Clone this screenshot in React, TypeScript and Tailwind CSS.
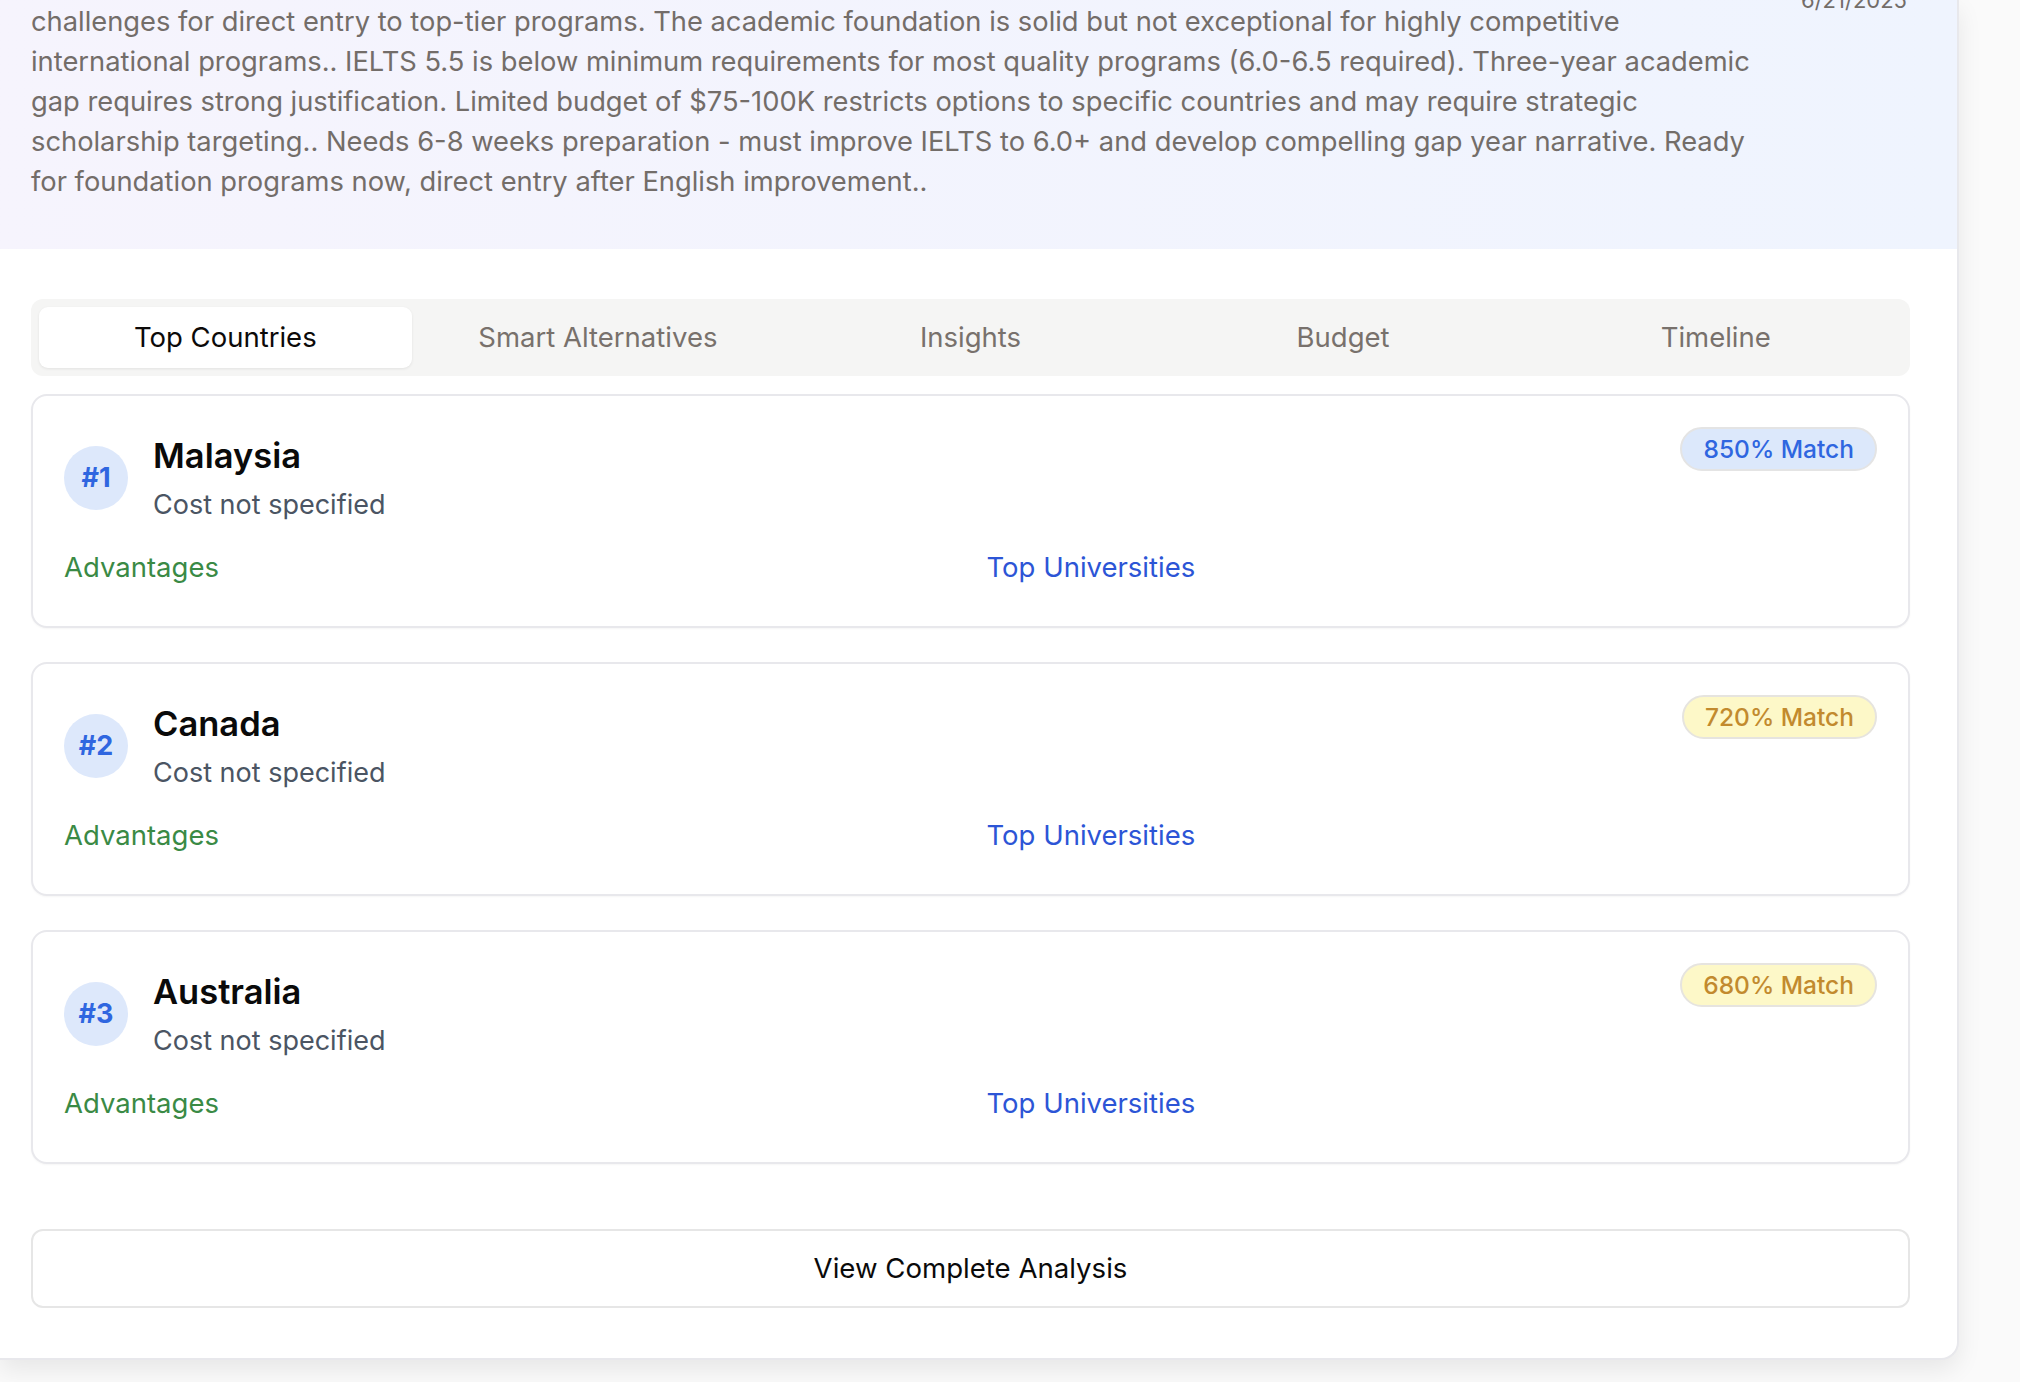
import React from 'react';

const summaryLines = [
  'challenges for direct entry to top-tier programs. The academic foundation is solid but not exceptional for highly competitive',
  'international programs.. IELTS 5.5 is below minimum requirements for most quality programs (6.0-6.5 required). Three-year academic',
  'gap requires strong justification. Limited budget of $75-100K restricts options to specific countries and may require strategic',
  'scholarship targeting.. Needs 6-8 weeks preparation - must improve IELTS to 6.0+ and develop compelling gap year narrative. Ready',
  'for foundation programs now, direct entry after English improvement..',
];

const tabs = ['Top Countries', 'Smart Alternatives', 'Insights', 'Budget', 'Timeline'];

const countries = [
  { rank: 1, name: 'Malaysia', match: 850, tone: 'blue' },
  { rank: 2, name: 'Canada', match: 720, tone: 'yellow' },
  { rank: 3, name: 'Australia', match: 680, tone: 'yellow' },
];

const CountryCard = ({ country }: { country: (typeof countries)[number] }) => {
  const isBlue = country.tone === 'blue';

  return (
    <div className="h-[234px] rounded-[16px] border-2 border-[#e8e8ec] bg-white px-[31px] pt-[31px] shadow-[0_1px_2px_rgba(0,0,0,0.04)]">
      <div className="flex items-start justify-between">
        <div className="flex items-center gap-[25px] pt-[5px]">
          <div className="-mt-[2px] flex h-[64px] w-[64px] items-center justify-center rounded-full bg-[#dde8fb]">
            <span className="text-[27px] font-bold text-[#2f66e0]">#{country.rank}</span>
          </div>
          <div>
            <h3 className="text-[34.5px] font-semibold leading-[48px] text-[#0a0a0a]">{country.name}</h3>
            <p className="mt-[4px] text-[27px] leading-[42px] text-[#4b5563]">Cost not specified</p>
          </div>
        </div>
        <span
          className={
            isBlue
              ? 'flex h-[44px] items-center rounded-full border-2 border-[#e4e4e4] bg-[#dce8fb] px-[21px] text-[24.5px] font-medium text-[#2f66e0]'
              : 'flex h-[44px] items-center rounded-full border-2 border-[#e6e4df] bg-[#fdf8c8] px-[21px] text-[24.5px] font-medium text-[#c28a2e]'
          }
        >
          {country.match}% Match
        </span>
      </div>

      <div className="mt-[20px] grid grid-cols-2 gap-[32px]">
        <p className="text-[27.5px] leading-[42px] text-[#3a8a45]">Advantages</p>
        <p className="text-[27.5px] leading-[42px] text-[#2c55d6]">Top Universities</p>
      </div>
    </div>
  );
};

const App = () => {
  return (
    <div className="h-[1382px] w-[2020px] overflow-hidden bg-[#fafafa] font-['Inter','Liberation_Sans',sans-serif]">
      <div className="w-[1959px] overflow-hidden rounded-br-[18px] border-r-2 border-b-2 border-[#e8e8ec] bg-white shadow-[0_10px_24px_rgba(0,0,0,0.08)]">
        <div className="flex items-start justify-between bg-linear-to-r from-[#f6f4fd] to-[#eff4fe] pb-[47px] pl-[31px] pr-[50px] pt-[2px]">
          <p className="text-[27.3px] leading-[40px] text-[#736d69]">
            {summaryLines.map((line) => (
              <span key={line} className="block whitespace-nowrap">
                {line}
              </span>
            ))}
          </p>
          <span className="-mt-[17px] text-[22px] leading-[30px] text-[#736d69]">6/21/2025</span>
        </div>

        <div className="pb-[50px] pl-[31px] pr-[47px] pt-[50px]">
          <div className="grid grid-cols-5 rounded-[12px] bg-[#f5f5f4] p-[8px]">
            {tabs.map((tab, i) => (
              <div
                key={tab}
                className={
                  i === 0
                    ? 'flex h-[61px] items-center justify-center rounded-[9px] bg-white text-[27.5px] text-[#0c0a09] shadow-[0_1px_3px_rgba(0,0,0,0.08)]'
                    : 'flex h-[61px] items-center justify-center text-[27.5px] text-[#78716c]'
                }
              >
                {tab}
              </div>
            ))}
          </div>

          <div className="mt-[18px] flex flex-col gap-[34px]">
            {countries.map((c) => (
              <CountryCard key={c.name} country={c} />
            ))}
          </div>

          <button className="mt-[65px] flex h-[79px] w-full items-center justify-center rounded-[12px] border-2 border-[#e6e6e6] bg-white text-[27.6px] font-normal text-[#0a0a0a]">
            View Complete Analysis
          </button>
        </div>
      </div>
    </div>
  );
};

export default App;
